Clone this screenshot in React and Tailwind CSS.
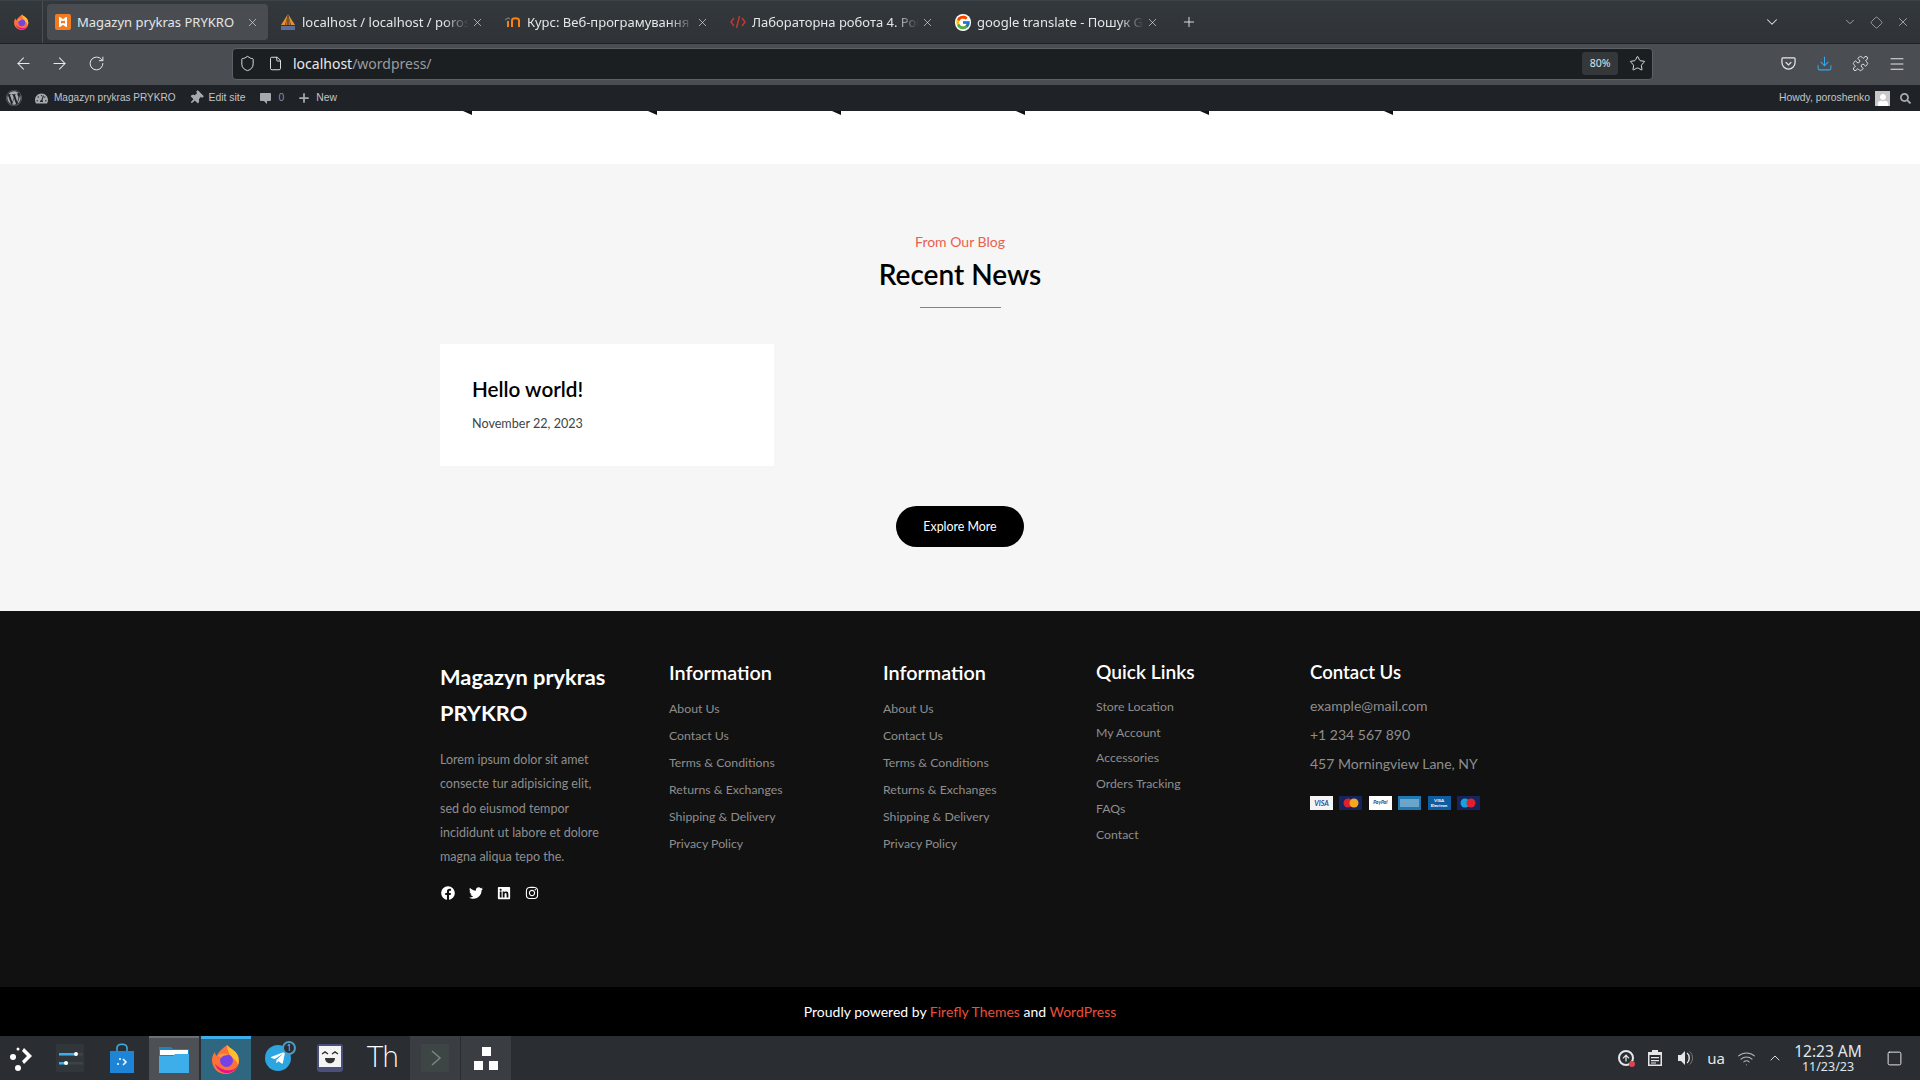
import React from "react";
import { ArrowLeft, ArrowRight, RotateCw, Shield, File, Star, Puzzle, Menu, X, Plus, ChevronDown, ChevronUp, Diamond, Download, Wifi, Square } from "lucide-react";
import { FaFacebook, FaTwitter, FaLinkedin, FaInstagram, FaWordpress, FaTachometerAlt, FaThumbtack, FaTelegramPlane, FaUser, FaArrowUp, FaSearch } from "react-icons/fa";
import { FcGoogle } from "react-icons/fc";

const webFont = { fontFamily: "Lato, sans-serif" };

function FirefoxLogo({ size = 22 }) {
  return (
    <svg width={size} height={size} viewBox="0 0 32 32">
      <path d="M17 1c2 3 9 5 11 11 3 8-2 18-12 18C7 30 2 23 2 16c0-3 1-6 3-8 0 2 1 3 2 4 1-4 5-7 10-11z" fill="#ff7139" />
      <path d="M17 1c2 3 9 5 11 11 1 3 1 6 0 9-1-4-4-7-8-8-1-4-3-8-3-12z" fill="#ffbd2e" />
      <path d="M5 20c2 6 8 10 14 9 4-1 7-3 9-8-3 5-8 6-13 5-4-1-7-3-10-6z" fill="#e31587" />
      <circle cx="16.5" cy="16.5" r="6.5" fill="#7542e5" />
      <path d="M8 11c3-2 8-2 11 0-4 0-7 1-8 3-1-1-2-2-3-3z" fill="#ff9640" />
    </svg>
  );
}

function XamppIcon() {
  return (
    <div className="w-[16px] h-[16px] rounded-[2px] bg-[#f27b21] flex items-center justify-center">
      <svg width="12" height="12" viewBox="0 0 12 12" fill="none" stroke="#fff" strokeWidth="2">
        <path d="M2 2c2 0 2 2 4 2s2-2 4-2M2 10c2 0 2-2 4-2s2 2 4 2M3 2v8M9 2v8" />
      </svg>
    </div>
  );
}

function SailIcon() {
  return (
    <svg width="16" height="18" viewBox="0 0 16 18">
      <path d="M8 1 L5 12 H1z" fill="#e8912d" />
      <path d="M8 1 L11 12 H15z" fill="#e8912d" />
      <path d="M7.5 3 V12 H5.5z M8.5 3 V12 H10.5z" fill="#c9701a" />
      <rect x="1" y="13" width="14" height="4" fill="#5d6d9c" />
    </svg>
  );
}

function MoodleIcon() {
  return (
    <svg width="16" height="12" viewBox="0 0 16 12" fill="none">
      <path d="M7 11V4.5c0-3 7-3 7 0V11" stroke="#f98012" strokeWidth="2" />
      <path d="M3 11V5" stroke="#f98012" strokeWidth="2" />
      <path d="M0 4l3-2 2 1" stroke="#777" strokeWidth="1.2" />
    </svg>
  );
}

function CodeIcon() {
  return (
    <svg width="16" height="14" viewBox="0 0 16 14" fill="none" stroke="#c0392b" strokeWidth="1.5">
      <path d="M4 3 L1 7 L4 11M12 3 L15 7 L12 11M9.5 1 L6.5 13" />
    </svg>
  );
}

const tabs = [
  { title: "Magazyn prykras PRYKRO", icon: <XamppIcon />, active: true },
  { title: "localhost / localhost / poroshenko", icon: <SailIcon /> },
  { title: "Курс: Веб-програмування", icon: <MoodleIcon /> },
  { title: "Лабораторна робота 4. Робота", icon: <CodeIcon /> },
  { title: "google translate - Пошук Google", icon: <FcGoogle size={17} className="bg-white rounded-full" /> },
];

function Tab({ tab }) {
  return (
    <div className="w-[225px] px-[2px] shrink-0">
      <div className={`h-[36px] rounded-[4px] flex items-center pl-[8px] pr-[9px] ${tab.active ? "bg-[#494d52]" : ""}`}>
        <div className="w-[16px] flex justify-center shrink-0">{tab.icon}</div>
        <div
          className={`ml-[6px] w-[167px] pt-[1px] overflow-hidden whitespace-nowrap text-[13px] text-[#e4e6e7] ${
            tab.active ? "" : "[mask-image:linear-gradient(to_right,black_85%,transparent)]"
          }`}
        >
          {tab.title}
        </div>
        <X size={13} strokeWidth={1.2} className="ml-auto text-[#e4e6e7] shrink-0" />
      </div>
    </div>
  );
}

function TabBar() {
  return (
    <div className="h-[44px] flex items-center bg-gradient-to-b from-[#33383d] to-[#2f3337] border-t border-[#3b424a] border-b-[#1f2225] border-b">
      <div className="w-[43px] mr-[2px] h-full flex items-center justify-center border-r border-[#4a4e53] shrink-0">
        <FirefoxLogo size={17} />
      </div>
      <div className="flex">
        {tabs.map((t) => (
          <Tab key={t.title} tab={t} />
        ))}
      </div>
      <Plus size={16} strokeWidth={1.4} className="ml-[11px] text-[#e4e6e7]" />
      <ChevronDown size={18} strokeWidth={1.4} className="ml-[566px] text-[#e4e6e7]" />
      <ChevronDown size={14} strokeWidth={1.4} className="ml-[62px] text-[#b5b8ba]" />
      <Diamond size={13} strokeWidth={1.4} className="ml-[13px] text-[#b5b8ba]" />
      <X size={14} strokeWidth={1.4} className="ml-[13px] text-[#b5b8ba]" />
    </div>
  );
}

function NavBar() {
  return (
    <div className="h-[41px] pb-[2px] bg-[#4a4d52] flex items-center text-[#e8e9ea]">
      <ArrowLeft size={19} strokeWidth={1.3} className="ml-[14px]" />
      <ArrowRight size={19} strokeWidth={1.3} className="ml-[17px]" />
      <RotateCw size={17} strokeWidth={1.4} className="ml-[19px]" />
      <div className="ml-[127px] w-[1421px] h-[32px] rounded-[4px] bg-[#1c1f22] border border-[#5d6064] flex items-center shrink-0">
        <Shield size={17} strokeWidth={1.3} className="ml-[6px]" />
        <File size={15} strokeWidth={1.5} className="ml-[12px]" />
        <div className="ml-[10px] text-[14px] text-[#e8e9ea]" style={{ fontFamily: "Noto Sans, sans-serif" }}>
          localhost<span className="text-[#9a9c9e]">/wordpress/</span>
        </div>
        <div className="ml-auto w-[36px] h-[23px] rounded-[3px] bg-[#35383b] text-[10.5px] text-[#d8e4ee] flex items-center justify-center">80%</div>
        <Star size={17} strokeWidth={1.3} className="ml-[11px] mr-[6px]" />
      </div>
      <svg width="15" height="15" viewBox="0 0 16 16" fill="none" stroke="currentColor" strokeWidth="1.3" className="ml-[128px]">
        <path d="M2 2h12c.6 0 1 .4 1 1v4c0 4-3.5 7-7 7s-7-3-7-7V3c0-.6.4-1 1-1z" />
        <path d="M5 6.5l3 3 3-3" />
      </svg>
      <Download size={17} strokeWidth={1.5} className="ml-[20px] text-[#2fa8f0]" />
      <Puzzle size={17} strokeWidth={1.3} className="ml-[19px]" />
      <Menu size={18} strokeWidth={1.3} className="ml-[19px]" />
    </div>
  );
}

function AdminBar() {
  return (
    <div className="h-[26px] bg-[#1f2327] flex items-center text-[10.4px] text-[#c3c4c7]" style={{ fontFamily: "Liberation Sans, sans-serif" }}>
      <FaWordpress size={16} className="ml-[6px] text-[#a7aaad]" />
      <FaTachometerAlt size={13} className="ml-[13px] text-[#a7aaad]" />
      <span className="ml-[6px] text-[10.05px]">Magazyn prykras PRYKRO</span>
      <FaThumbtack size={14} className="ml-[13px] text-[#a7aaad] rotate-45" />
      <span className="ml-[6px]">Edit site</span>
      <svg width="11" height="12" viewBox="0 0 11 12" fill="#a7aaad" className="ml-[14px]">
        <path d="M1 1h9c.5 0 1 .4 1 1v6c0 .5-.5 1-1 1H7v3L4 9H1c-.5 0-1-.5-1-1V2c0-.6.5-1 1-1z" />
      </svg>
      <span className="ml-[8px] text-[#8c8f94]">0</span>
      <Plus size={14} strokeWidth={3} className="ml-[13px] text-[#a7aaad]" />
      <span className="ml-[5px]">New</span>
      <span className="ml-auto">Howdy, poroshenko</span>
      <div className="ml-[5px] w-[15px] h-[15px] bg-[#c8c8c8] flex items-end justify-center overflow-hidden">
        <FaUser size={12} className="text-white" />
      </div>
      <FaSearch size={11} className="ml-[10px] mr-[9px] text-[#a7aaad]" />
    </div>
  );
}

const markXs = [463, 648, 832, 1016, 1200, 1384];

function WhiteStrip() {
  return (
    <div className="relative h-[53px] bg-white">
      {markXs.map((x) => (
        <svg key={x} width="9" height="4" viewBox="0 0 9 4" className="absolute top-0" style={{ left: x }}>
          <path d="M0 0H9V4z" fill="#111" />
        </svg>
      ))}
    </div>
  );
}

function Blog() {
  return (
    <section className="h-[447px] bg-[#f6f6f6] pt-[67px]" style={webFont}>
      <div className="text-center text-[14px] leading-[22px] text-[#e9604e]">From Our Blog</div>
      <h2 className="mt-[3px] text-center text-[28px] leading-[36px] font-semibold text-black">Recent News</h2>
      <div className="mt-[15px] mx-auto w-[81px] h-[1px] bg-[#e2604c]"></div>
      <div className="mt-[36px] ml-[440px] w-[334px] h-[122px] bg-white pl-[32px] pt-[30px]">
        <h3 className="text-[20.7px] leading-[30px] font-semibold text-black">Hello world!</h3>
        <div className="mt-[10px] text-[12.6px] leading-[20px] text-[#444]">November 22, 2023</div>
      </div>
      <div className="mt-[40px] pt-[2px] mx-auto w-[128px] h-[41px] rounded-full bg-black text-white text-[12.4px] flex items-center justify-center">Explore More</div>
    </section>
  );
}

const infoLinks = ["About Us", "Contact Us", "Terms & Conditions", "Returns & Exchanges", "Shipping & Delivery", "Privacy Policy"];
const quickLinks = ["Store Location", "My Account", "Accessories", "Orders Tracking", "FAQs", "Contact"];

function LinkColumn({ title, links }) {
  return (
    <div>
      <h4 className="text-[19.8px] leading-[26px] font-semibold text-white">{title}</h4>
      <ul className="mt-[10px] text-[12.3px] leading-[27px] text-[#8e8e8e]">
        {links.map((l) => (
          <li key={l}>{l}</li>
        ))}
      </ul>
    </div>
  );
}

function Card({ bg, children }) {
  return <div className={`w-[23px] h-[14px] flex items-center justify-center overflow-hidden ${bg}`}>{children}</div>;
}

function PaymentCards() {
  return (
    <div className="mt-[18px] flex gap-[6.4px]">
      <Card bg="bg-[#f4f4f4]">
        <span className="text-[7px] font-bold italic text-[#1a4f9c]">VISA</span>
      </Card>
      <Card bg="bg-[#14245c]">
        <svg width="18" height="10" viewBox="0 0 18 10">
          <circle cx="6" cy="5" r="4.5" fill="#e0202c" />
          <circle cx="12" cy="5" r="4.5" fill="#f5a623" />
        </svg>
      </Card>
      <Card bg="bg-white">
        <span className="text-[5px] font-bold italic text-[#1a3f8c]">PayPal</span>
      </Card>
      <Card bg="bg-[#2478b0]">
        <div className="w-[19px] h-[8px] bg-[#6aa6cc]"></div>
      </Card>
      <Card bg="bg-[#0f5c9e]">
        <span className="text-[4.5px] leading-[5px] font-bold text-white text-center">VISA Electron</span>
      </Card>
      <Card bg="bg-[#14245c]">
        <svg width="18" height="10" viewBox="0 0 18 10">
          <circle cx="6" cy="5" r="4.5" fill="#1aa0dc" />
          <circle cx="12" cy="5" r="4.5" fill="#e0202c" />
        </svg>
      </Card>
    </div>
  );
}

function Footer() {
  return (
    <footer className="h-[376px] bg-[#111111] pt-[48px]" style={webFont}>
      <div className="ml-[440px] grid grid-cols-[229px_214px_213px_214px_auto]">
        <div>
          <h3 className="text-[21.8px] leading-[36px] font-bold text-white w-[190px]">Magazyn prykras PRYKRO</h3>
          <p className="mt-[17px] w-[165px] text-[12.5px] leading-[24.3px] text-[#8e8e8e]">
            Lorem ipsum dolor sit amet consecte tur adipisicing elit, sed do eiusmod tempor incididunt ut labore et dolore magna aliqua tepo the.
          </p>
          <div className="mt-[17px] flex gap-[14px] ml-[1px] text-white">
            <FaFacebook size={14} />
            <FaTwitter size={14} />
            <FaLinkedin size={14} />
            <FaInstagram size={14} />
          </div>
        </div>
        <LinkColumn title="Information" links={infoLinks} />
        <LinkColumn title="Information" links={infoLinks} />
        <div>
          <h4 className="text-[19.2px] leading-[26px] font-semibold text-white">Quick Links</h4>
          <ul className="mt-[9px] text-[12.3px] leading-[25.6px] text-[#8e8e8e]">
            {quickLinks.map((l) => (
              <li key={l}>{l}</li>
            ))}
          </ul>
        </div>
        <div>
          <h4 className="text-[18.6px] leading-[26px] font-semibold text-white">Contact Us</h4>
          <ul className="mt-[6px] text-[14px] leading-[29px] text-[#8e8e8e]">
            <li>example@mail.com</li>
            <li>+1 234 567 890</li>
            <li>457 Morningview Lane, NY</li>
          </ul>
          <PaymentCards />
        </div>
      </div>
    </footer>
  );
}

function Copyright() {
  return (
    <div className="h-[49px] bg-black flex items-center justify-center text-[14px] text-white" style={webFont}>
      <span>
        Proudly powered by <span className="text-[#e8503a]">Firefly Themes</span> and <span className="text-[#e8503a]">WordPress</span>
      </span>
    </div>
  );
}

function TaskItem({ className = "", children }) {
  return <div className={`h-full flex items-center justify-center shrink-0 ${className}`}>{children}</div>;
}

function Taskbar() {
  return (
    <div className="h-[44px] bg-[#2a2e32] flex items-center text-[#e4e6e7]" style={{ fontFamily: "Noto Sans, sans-serif" }}>
      <TaskItem className="w-[42px]">
        <svg width="26" height="26" viewBox="0 0 26 26" fill="#fff">
          <circle cx="5" cy="12" r="3" />
          <circle cx="10" cy="23" r="3" />
          <circle cx="10" cy="4" r="1.5" />
          <path d="M16 3l8 8-8 8-2-3 5-5-5-5z" />
        </svg>
      </TaskItem>
      <TaskItem className="w-[50px] ml-[3px]">
        <svg width="28" height="28" viewBox="0 0 28 28">
          <rect width="28" height="28" fill="#31363a" />
          <rect x="3" y="9" width="24" height="2.5" fill="#3d4449" />
          <rect x="3" y="9" width="18" height="2.5" fill="#3daee9" />
          <circle cx="20" cy="10" r="2" fill="#fff" />
          <rect x="3" y="18" width="24" height="2.5" fill="#3d4449" />
          <rect x="3" y="18" width="9" height="2.5" fill="#3daee9" />
          <circle cx="10" cy="19" r="2" fill="#fff" />
        </svg>
      </TaskItem>
      <TaskItem className="w-[50px] ml-[2px]">
        <svg width="26" height="30" viewBox="0 0 26 30" fill="none">
          <path d="M8 9V5c0-5 10-5 10 0v4" stroke="#3daee9" strokeWidth="1.5" />
          <rect x="1" y="8" width="24" height="22" fill="#1d84d6" />
          <circle cx="11" cy="16" r="1" fill="#fff" />
          <circle cx="9" cy="21" r="1" fill="#fff" />
          <path d="M14 16l3 3-3 3" stroke="#fff" strokeWidth="1.5" />
        </svg>
      </TaskItem>
      <TaskItem className="w-[50px] ml-[2px] bg-[#4d5055] border-t-[2px] border-[#6d7074]">
        <svg width="30" height="28" viewBox="0 0 30 28">
          <path d="M0 2h12l2 2h16v24H0z" fill="#1d84c4" />
          <rect x="1" y="5" width="28" height="5" fill="#fff" />
          <path d="M0 11h14l2-2h14v19H0z" fill="#3daee9" />
        </svg>
      </TaskItem>
      <TaskItem className="w-[50px] ml-[2px] bg-[#2f6680] border-t-[3px] border-[#3daee9]">
        <FirefoxLogo size={32} />
      </TaskItem>
      <TaskItem className="w-[50px] ml-[2px]">
        <div className="relative w-[30px] h-[30px] flex items-center justify-center">
          <div className="w-[26px] h-[26px] rounded-full bg-[#2ca5e0] flex items-center justify-center">
            <FaTelegramPlane size={16} className="text-white" />
          </div>
          <div className="absolute -top-[2px] -right-[3px] w-[14px] h-[14px] rounded-full bg-[#2a2e32] border-2 border-[#4a9cc0] text-[8px] text-[#9ccde2] flex items-center justify-center">1</div>
        </div>
      </TaskItem>
      <TaskItem className="w-[50px] ml-[2px]">
        <svg width="28" height="30" viewBox="0 0 28 30">
          <rect x="1" y="1" width="26" height="28" rx="3" fill="#4c4f7a" />
          <rect x="3" y="3" width="22" height="21" fill="#f4f4f4" />
          <path d="M6 11l3-2 3 2M16 11l3-2 3 2" stroke="#333" strokeWidth="1.5" fill="none" />
          <path d="M9 15h10c0 7-10 7-10 0z" fill="#333" />
        </svg>
      </TaskItem>
      <TaskItem className="w-[50px] ml-[2px]">
        <span className="text-[28px] text-white tracking-[-2px]" style={{ fontFamily: "DejaVu Sans, sans-serif", fontWeight: 200 }}>Th</span>
      </TaskItem>
      <TaskItem className="w-[50px] ml-[3px] bg-[#3a3e42]">
        <svg width="28" height="28" viewBox="0 0 28 28" fill="none">
          <rect width="28" height="28" fill="#3e4645" />
          <path d="M11 7l8 7-8 7" stroke="#7d8585" strokeWidth="1.5" />
        </svg>
      </TaskItem>
      <TaskItem className="w-[50px] ml-[1px] bg-[#3a3e42]">
        <div className="flex flex-col items-center gap-[5px]">
          <div className="w-[9px] h-[9px] bg-white"></div>
          <div className="flex gap-[6px]">
            <div className="w-[9px] h-[9px] bg-white"></div>
            <div className="w-[9px] h-[9px] bg-white"></div>
          </div>
        </div>
      </TaskItem>
      <div className="ml-auto flex items-center">
        <div className="relative w-[16px] h-[16px] rounded-full border-2 border-[#e4e6e7] flex items-center justify-center">
          <FaArrowUp size={8} />
          <div className="absolute -right-[3px] -bottom-[3px] w-[6px] h-[6px] rounded-full bg-[#da4453]"></div>
        </div>
        <svg width="14" height="16" viewBox="0 0 14 16" className="ml-[14px]" fill="#e4e6e7">
          <path d="M4 0h6v2h4v14H0V2h4zM1.5 5v9.5h11V5zM3 7h8v1.2H3zM3 10h8v1.2H3zM3 12.5h5v1H3z" fillRule="evenodd" />
        </svg>
        <svg width="16" height="16" viewBox="0 0 16 16" className="ml-[15px]" fill="none">
          <path d="M1 5h3l4-4v14l-4-4H1z" fill="#e4e6e7" />
          <path d="M10 3c3 2 3 8 0 10" stroke="#e4e6e7" strokeWidth="1.4" />
          <path d="M12.5 1.5c4 3 4 10 0 13" stroke="#777" strokeWidth="1" />
        </svg>
        <span className="ml-[14px] text-[15px]">ua</span>
        <Wifi size={19} strokeWidth={1.3} className="ml-[12px] text-[#b5b8ba]" />
        <ChevronUp size={16} strokeWidth={1.4} className="ml-[11px]" />
        <div className="ml-[9px] w-[72px] flex flex-col items-center text-[#dfe7ec]">
          <div className="text-[15.5px] leading-[16px] whitespace-nowrap">12:23 AM</div>
          <div className="mt-[1px] text-[12.5px] leading-[14px]">11/23/23</div>
        </div>
        <Square size={17} strokeWidth={1.4} className="ml-[22px] mr-[17px]" />
      </div>
    </div>
  );
}

export default function App() {
  return (
    <div className="h-[1080px] overflow-hidden" style={{ fontFamily: "Noto Sans, sans-serif" }}>
      <TabBar />
      <NavBar />
      <AdminBar />
      <WhiteStrip />
      <Blog />
      <Footer />
      <Copyright />
      <Taskbar />
    </div>
  );
}
